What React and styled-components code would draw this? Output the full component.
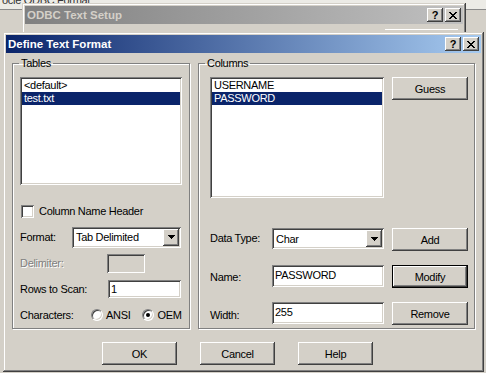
import React from 'react';
import styled, { createGlobalStyle, css } from 'styled-components';

const GlobalStyle = createGlobalStyle`
    html, body {
        margin: 0;
        padding: 0;
    }
    body {
        width: 486px;
        height: 373px;
        overflow: hidden;
        background: #d4d0c8;
        font-family: "Liberation Sans", Arial, sans-serif;
        font-size: 11px;
        letter-spacing: -0.3px;
        color: #000;
    }
    button {
        font-family: inherit;
        font-size: 11px;
        letter-spacing: -0.3px;
        color: #000;
    }
`;

const raised = css`
    box-shadow: inset -1px -1px #404040, inset 1px 1px #fff, inset -2px -2px #808080, inset 2px 2px #d4d0c8;
`;

const sunken = css`
    box-shadow: inset 1px 1px #808080, inset -1px -1px #fff, inset 2px 2px #404040, inset -2px -2px #d4d0c8;
`;

const Desktop = styled.div`
    position: relative;
    width: 486px;
    height: 373px;
    overflow: hidden;
    background: #d4d0c8;
`;

const TopStrip = styled.div`
    height: 9px;
    overflow: hidden;
    background: #ecebe6;
    border-bottom: 1px solid #8a8a8a;

    span {
        display: block;
        margin-top: -6px;
        padding-left: 2px;
        color: #333;
        white-space: nowrap;
    }
`;

const Window = styled.div`
    position: absolute;
    left: ${p => p.$x}px;
    top: ${p => p.$y}px;
    width: ${p => p.$w}px;
    height: ${p => p.$h}px;
    box-sizing: border-box;
    padding: 3px;
    background: #d4d0c8;
    display: flex;
    flex-direction: column;
    box-shadow: inset -1px -1px #404040, inset 1px 1px #d4d0c8, inset -2px -2px #808080, inset 2px 2px #fff;
`;

const TitleBar = styled.div`
    height: 18px;
    flex: none;
    display: flex;
    align-items: center;
    padding: 0 2px;
    background: ${p => p.$active
        ? 'linear-gradient(to right, #0a246a, #a6caf0)'
        : 'linear-gradient(to right, #808080, #c0c0c0)'};
`;

const Title = styled.span`
    flex: 1;
    font-weight: bold;
    font-size: 11.5px;
    letter-spacing: 0;
    white-space: nowrap;
    color: ${p => p.$active ? '#fff' : '#d4d0c8'};
`;

const CaptionButton = styled.button`
    width: 16px;
    height: 14px;
    padding: 0;
    border: 0;
    margin-left: ${p => p.$gap || 0}px;
    background: #d4d0c8;
    display: flex;
    align-items: center;
    justify-content: center;
    font-weight: bold;
    font-size: 11px;
    line-height: 1;
    ${raised}
`;

const BackBody = styled.div`
    padding-top: 5px;
    display: flex;
    justify-content: flex-end;
    padding-right: 5px;
`;

const Etch = styled.div`
    width: 73px;
    height: 1px;
    background: #fff;
`;

const DialogBody = styled.div`
    flex: 1;
    padding: 4px 0 0 6px;
    display: flex;
    flex-direction: column;
`;

const Groups = styled.div`
    display: flex;
    gap: 8px;
`;

const GroupBox = styled.fieldset`
    margin: 0;
    padding: 0;
    min-width: 0;
    width: ${p => p.$w}px;
    height: 272px;
    box-sizing: border-box;
    border: 1px solid #808080;
    box-shadow: inset 1px 1px #fff, 1px 1px #fff;

    legend {
        margin-left: 6px;
        padding: 0 2px;
        line-height: 13px;
        font-size: 11px;
    }
`;

const GroupInner = styled.div`
    padding: 7px 0 0 ${p => p.$left}px;
    display: flex;
    flex-direction: column;
`;

const ListBox = styled.div`
    width: ${p => p.$w}px;
    height: ${p => p.$h}px;
    box-sizing: border-box;
    padding: 2px;
    background: #fff;
    ${sunken}
`;

const ListItem = styled.div`
    height: 13px;
    line-height: 13px;
    padding-left: 2px;
    white-space: nowrap;
    background: ${p => p.$selected ? '#0a246a' : 'transparent'};
    color: ${p => p.$selected ? '#fff' : '#000'};
`;

const FormRows = styled.div`
    margin-top: 13px;
    display: flex;
    flex-direction: column;
`;

const Row = styled.div`
    height: 26px;
    display: flex;
    align-items: center;
`;

const Label = styled.span`
    width: ${p => p.$w}px;
    flex: none;
    white-space: nowrap;
    color: ${p => p.$disabled ? '#808080' : '#000'};
    text-shadow: ${p => p.$disabled ? '1px 1px #fff' : 'none'};
`;

const CheckBox = styled.span`
    width: 13px;
    height: 13px;
    margin: 0 5px 0 1px;
    box-sizing: border-box;
    background: #fff;
    ${sunken}
`;

const Combo = styled.div`
    width: ${p => p.$w}px;
    height: 21px;
    box-sizing: border-box;
    padding: 2px;
    background: #fff;
    display: flex;
    align-items: center;
    ${sunken}
`;

const ComboText = styled.span`
    flex: 1;
    padding-left: 2px;
    white-space: nowrap;
`;

const DropButton = styled.div`
    width: 16px;
    height: 17px;
    flex: none;
    background: #d4d0c8;
    display: flex;
    align-items: center;
    justify-content: center;
    ${raised}
`;

const TextField = styled.div`
    width: ${p => p.$w}px;
    height: ${p => p.$h || 20}px;
    box-sizing: border-box;
    padding: ${p => p.$pt || 3}px 3px 0;
    line-height: 13px;
    white-space: nowrap;
    background: ${p => p.$disabled ? '#d4d0c8' : '#fff'};
    ${sunken}
`;

const RadioGroup = styled.div`
    display: flex;
    align-items: center;
    gap: 12px;
`;

const Radio = styled.label`
    display: flex;
    align-items: center;
    gap: 3px;
`;

const RadioDot = styled.span`
    width: 12px;
    height: 12px;
    box-sizing: border-box;
    border-radius: 50%;
    background: #fff;
    border: 1px solid;
    border-color: #808080 #fff #fff #808080;
    box-shadow: inset 1px 1px #404040, inset -1px -1px #d4d0c8;
    display: flex;
    align-items: center;
    justify-content: center;

    &::after {
        content: '';
        width: 4px;
        height: 4px;
        border-radius: 50%;
        background: ${p => p.$checked ? '#000' : 'transparent'};
    }
`;

const ColumnRow = styled.div`
    display: flex;
    align-items: flex-start;
    gap: 8px;
    margin-top: ${p => p.$mt || 0}px;
`;

const FieldCell = styled.div`
    width: 174px;
    height: 23px;
    display: flex;
    align-items: flex-start;
`;

const FieldLabel = styled.span`
    width: 62px;
    flex: none;
    padding-top: ${p => p.$pt}px;
    white-space: nowrap;
`;

const PushButton = styled.button`
    width: ${p => p.$w || 75}px;
    height: 23px;
    flex: none;
    padding: 0;
    border: 0;
    background: #d4d0c8;
    ${p => p.$default
        ? css`box-shadow: inset 0 0 0 1px #000, inset -2px -2px #404040, inset 2px 2px #fff, inset -3px -3px #808080;`
        : raised}
`;

const ButtonBar = styled.div`
    margin-top: 13px;
    padding-left: 90px;
    display: flex;
    gap: 23px;
`;

const HelpGlyph = () => <span>?</span>;

const CloseGlyph = () => (
    <svg width="8" height="7" viewBox="0 0 8 7" shapeRendering="crispEdges">
        <path d="M0 0h2v1H0zM6 0h2v1H6zM1 1h2v1H1zM5 1h2v1H5zM2 2h4v1H2zM3 3h2v1H3zM2 4h4v1H2zM1 5h2v1H1zM5 5h2v1H5zM0 6h2v1H0zM6 6h2v1H6z" fill="#000" />
    </svg>
);

const DownArrow = () => (
    <svg width="7" height="4" viewBox="0 0 7 4" shapeRendering="crispEdges">
        <path d="M0 0h7v1H0zM1 1h5v1H1zM2 2h3v1H2zM3 3h1v1H3z" fill="#000" />
    </svg>
);

const Caption = ({ title, active }) => (
    <TitleBar $active={active}>
        <Title $active={active}>{title}</Title>
        <CaptionButton><HelpGlyph /></CaptionButton>
        <CaptionButton $gap={2}><CloseGlyph /></CaptionButton>
    </TitleBar>
);

const ComboBox = ({ value, width }) => (
    <Combo $w={width}>
        <ComboText>{value}</ComboText>
        <DropButton><DownArrow /></DropButton>
    </Combo>
);

const App = () => {
    return (
        <>
            <GlobalStyle />
            <Desktop>
                <TopStrip><span>ocle ODBC Format</span></TopStrip>

                <Window $x={22} $y={3} $w={444} $h={80}>
                    <Caption title="ODBC Text Setup" />
                    <BackBody><Etch /></BackBody>
                </Window>

                <Window $x={3} $y={32} $w={481} $h={340}>
                    <Caption title="Define Text Format" active />
                    <DialogBody>
                        <Groups>
                            <GroupBox $w={178}>
                                <legend>Tables</legend>
                                <GroupInner $left={7}>
                                    <ListBox $w={162} $h={108}>
                                        <ListItem>&lt;default&gt;</ListItem>
                                        <ListItem $selected>test.txt</ListItem>
                                    </ListBox>
                                    <FormRows>
                                        <Row>
                                            <CheckBox />
                                            <span>Column Name Header</span>
                                        </Row>
                                        <Row>
                                            <Label $w={52}>Format:</Label>
                                            <ComboBox value="Tab Delimited" width={109} />
                                        </Row>
                                        <Row>
                                            <Label $w={87} $disabled>Delimiter:</Label>
                                            <TextField $w={38} $h={19} $disabled />
                                        </Row>
                                        <Row>
                                            <Label $w={88}>Rows to Scan:</Label>
                                            <TextField $w={73} $h={18} $pt={3}>1</TextField>
                                        </Row>
                                        <Row>
                                            <Label $w={71}>Characters:</Label>
                                            <RadioGroup>
                                                <Radio><RadioDot />ANSI</Radio>
                                                <Radio><RadioDot $checked />OEM</Radio>
                                            </RadioGroup>
                                        </Row>
                                    </FormRows>
                                </GroupInner>
                            </GroupBox>

                            <GroupBox $w={277}>
                                <legend>Columns</legend>
                                <GroupInner $left={11}>
                                    <ColumnRow>
                                        <ListBox $w={174} $h={121}>
                                            <ListItem>USERNAME</ListItem>
                                            <ListItem $selected>PASSWORD</ListItem>
                                        </ListBox>
                                        <PushButton $w={76}>Guess</PushButton>
                                    </ColumnRow>
                                    <ColumnRow $mt={30}>
                                        <FieldCell>
                                            <FieldLabel $pt={4}>Data Type:</FieldLabel>
                                            <ComboBox value="Char" width={112} />
                                        </FieldCell>
                                        <PushButton $w={76}>Add</PushButton>
                                    </ColumnRow>
                                    <ColumnRow $mt={14}>
                                        <FieldCell>
                                            <FieldLabel $pt={6}>Name:</FieldLabel>
                                            <TextField $w={112} $h={22} $pt={4}>PASSWORD</TextField>
                                        </FieldCell>
                                        <PushButton $w={76} $default>Modify</PushButton>
                                    </ColumnRow>
                                    <ColumnRow $mt={14}>
                                        <FieldCell>
                                            <FieldLabel $pt={7}>Width:</FieldLabel>
                                            <TextField $w={112} $h={22} $pt={4}>255</TextField>
                                        </FieldCell>
                                        <PushButton $w={76}>Remove</PushButton>
                                    </ColumnRow>
                                </GroupInner>
                            </GroupBox>
                        </Groups>

                        <ButtonBar>
                            <PushButton>OK</PushButton>
                            <PushButton>Cancel</PushButton>
                            <PushButton>Help</PushButton>
                        </ButtonBar>
                    </DialogBody>
                </Window>
            </Desktop>
        </>
    );
};

export default App;
